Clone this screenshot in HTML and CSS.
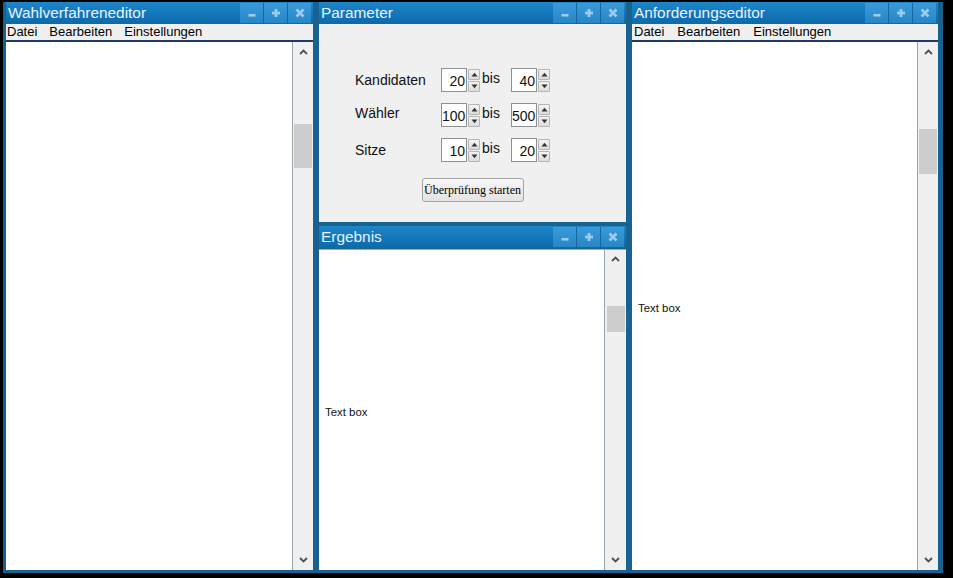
FILE: index.html
```html
<!DOCTYPE html>
<html lang="de">
<head>
<meta charset="utf-8">
<title>Wahlverfahren</title>
<link rel="stylesheet" href="styles.css">
</head>
<body>
<div class="desktop">
  <div class="col col-left">
    <section class="win win-fill">
      <header class="titlebar">
        <span class="title">Wahlverfahreneditor</span>
        <div class="ctrls">
          <span class="ctrl"><svg width="10" height="10" viewBox="0 0 10 10"><rect x="1.5" y="6" width="7" height="2.6" fill="#9fcbec"/></svg></span>
          <span class="ctrl"><svg width="10" height="10" viewBox="0 0 10 10"><rect x="1" y="3.6" width="8" height="2.8" fill="#9fcbec"/><rect x="3.6" y="1" width="2.8" height="8" fill="#9fcbec"/></svg></span>
          <span class="ctrl"><svg width="10" height="10" viewBox="0 0 10 10"><path d="M1.5 1.5 L8.5 8.5 M8.5 1.5 L1.5 8.5" stroke="#9fcbec" stroke-width="2.6"/></svg></span>
        </div>
      </header>
      <nav class="menubar"><span>Datei</span><span>Bearbeiten</span><span>Einstellungen</span></nav>
      <div class="editor">
        <div class="textarea"></div>
        <div class="scrollbar sb-left">
          <div class="arrow"><svg width="9" height="6" viewBox="0 0 9 6"><path d="M1 5 L4.5 1.5 L8 5" fill="none" stroke="#505050" stroke-width="1.8"/></svg></div>
          <div class="thumb"></div>
          <div class="track"></div>
          <div class="arrow arrow-down"><svg width="9" height="6" viewBox="0 0 9 6"><path d="M1 1 L4.5 4.5 L8 1" fill="none" stroke="#505050" stroke-width="1.8"/></svg></div>
        </div>
      </div>
    </section>
  </div>

  <div class="col col-mid">
    <section class="win win-param">
      <header class="titlebar">
        <span class="title">Parameter</span>
        <div class="ctrls">
          <span class="ctrl"><svg width="10" height="10" viewBox="0 0 10 10"><rect x="1.5" y="6" width="7" height="2.6" fill="#9fcbec"/></svg></span>
          <span class="ctrl"><svg width="10" height="10" viewBox="0 0 10 10"><rect x="1" y="3.6" width="8" height="2.8" fill="#9fcbec"/><rect x="3.6" y="1" width="2.8" height="8" fill="#9fcbec"/></svg></span>
          <span class="ctrl"><svg width="10" height="10" viewBox="0 0 10 10"><path d="M1.5 1.5 L8.5 8.5 M8.5 1.5 L1.5 8.5" stroke="#9fcbec" stroke-width="2.6"/></svg></span>
        </div>
      </header>
      <div class="param-body">
        <div class="param-grid">
          <span class="plabel">Kandidaten</span>
          <div class="spin"><span class="spin-field">20</span><span class="spin-btns"><span class="sbtn"><svg width="7" height="5" viewBox="0 0 7 5"><path d="M0.5 4.5 L3.5 0.8 L6.5 4.5 Z" fill="#333"/></svg></span><span class="sbtn"><svg width="7" height="5" viewBox="0 0 7 5"><path d="M0.5 0.5 L3.5 4.2 L6.5 0.5 Z" fill="#333"/></svg></span></span></div>
          <span class="bis">bis</span>
          <div class="spin"><span class="spin-field">40</span><span class="spin-btns"><span class="sbtn"><svg width="7" height="5" viewBox="0 0 7 5"><path d="M0.5 4.5 L3.5 0.8 L6.5 4.5 Z" fill="#333"/></svg></span><span class="sbtn"><svg width="7" height="5" viewBox="0 0 7 5"><path d="M0.5 0.5 L3.5 4.2 L6.5 0.5 Z" fill="#333"/></svg></span></span></div>

          <span class="plabel plabel-up">Wähler</span>
          <div class="spin"><span class="spin-field">100</span><span class="spin-btns"><span class="sbtn"><svg width="7" height="5" viewBox="0 0 7 5"><path d="M0.5 4.5 L3.5 0.8 L6.5 4.5 Z" fill="#333"/></svg></span><span class="sbtn"><svg width="7" height="5" viewBox="0 0 7 5"><path d="M0.5 0.5 L3.5 4.2 L6.5 0.5 Z" fill="#333"/></svg></span></span></div>
          <span class="bis">bis</span>
          <div class="spin"><span class="spin-field">500</span><span class="spin-btns"><span class="sbtn"><svg width="7" height="5" viewBox="0 0 7 5"><path d="M0.5 4.5 L3.5 0.8 L6.5 4.5 Z" fill="#333"/></svg></span><span class="sbtn"><svg width="7" height="5" viewBox="0 0 7 5"><path d="M0.5 0.5 L3.5 4.2 L6.5 0.5 Z" fill="#333"/></svg></span></span></div>

          <span class="plabel">Sitze</span>
          <div class="spin"><span class="spin-field">10</span><span class="spin-btns"><span class="sbtn"><svg width="7" height="5" viewBox="0 0 7 5"><path d="M0.5 4.5 L3.5 0.8 L6.5 4.5 Z" fill="#333"/></svg></span><span class="sbtn"><svg width="7" height="5" viewBox="0 0 7 5"><path d="M0.5 0.5 L3.5 4.2 L6.5 0.5 Z" fill="#333"/></svg></span></span></div>
          <span class="bis">bis</span>
          <div class="spin"><span class="spin-field">20</span><span class="spin-btns"><span class="sbtn"><svg width="7" height="5" viewBox="0 0 7 5"><path d="M0.5 4.5 L3.5 0.8 L6.5 4.5 Z" fill="#333"/></svg></span><span class="sbtn"><svg width="7" height="5" viewBox="0 0 7 5"><path d="M0.5 0.5 L3.5 4.2 L6.5 0.5 Z" fill="#333"/></svg></span></span></div>
        </div>
        <button class="start-btn" type="button">Überprüfung starten</button>
      </div>
    </section>

    <section class="win win-fill win-result">
      <header class="titlebar">
        <span class="title">Ergebnis</span>
        <div class="ctrls">
          <span class="ctrl"><svg width="10" height="10" viewBox="0 0 10 10"><rect x="1.5" y="6" width="7" height="2.6" fill="#9fcbec"/></svg></span>
          <span class="ctrl"><svg width="10" height="10" viewBox="0 0 10 10"><rect x="1" y="3.6" width="8" height="2.8" fill="#9fcbec"/><rect x="3.6" y="1" width="2.8" height="8" fill="#9fcbec"/></svg></span>
          <span class="ctrl"><svg width="10" height="10" viewBox="0 0 10 10"><path d="M1.5 1.5 L8.5 8.5 M8.5 1.5 L1.5 8.5" stroke="#9fcbec" stroke-width="2.6"/></svg></span>
        </div>
      </header>
      <div class="editor editor-boxed">
        <div class="textarea"><span class="tb-label">Text box</span></div>
        <div class="scrollbar sb-result">
          <div class="arrow"><svg width="9" height="6" viewBox="0 0 9 6"><path d="M1 5 L4.5 1.5 L8 5" fill="none" stroke="#505050" stroke-width="1.8"/></svg></div>
          <div class="thumb"></div>
          <div class="track"></div>
          <div class="arrow arrow-down"><svg width="9" height="6" viewBox="0 0 9 6"><path d="M1 1 L4.5 4.5 L8 1" fill="none" stroke="#505050" stroke-width="1.8"/></svg></div>
        </div>
      </div>
    </section>
  </div>

  <div class="col col-right">
    <section class="win win-fill">
      <header class="titlebar">
        <span class="title">Anforderungseditor</span>
        <div class="ctrls">
          <span class="ctrl"><svg width="10" height="10" viewBox="0 0 10 10"><rect x="1.5" y="6" width="7" height="2.6" fill="#9fcbec"/></svg></span>
          <span class="ctrl"><svg width="10" height="10" viewBox="0 0 10 10"><rect x="1" y="3.6" width="8" height="2.8" fill="#9fcbec"/><rect x="3.6" y="1" width="2.8" height="8" fill="#9fcbec"/></svg></span>
          <span class="ctrl"><svg width="10" height="10" viewBox="0 0 10 10"><path d="M1.5 1.5 L8.5 8.5 M8.5 1.5 L1.5 8.5" stroke="#9fcbec" stroke-width="2.6"/></svg></span>
        </div>
      </header>
      <nav class="menubar menubar-wide"><span>Datei</span><span>Bearbeiten</span><span>Einstellungen</span></nav>
      <div class="editor">
        <div class="textarea"><span class="tb-label">Text box</span></div>
        <div class="scrollbar sb-right">
          <div class="arrow"><svg width="9" height="6" viewBox="0 0 9 6"><path d="M1 5 L4.5 1.5 L8 5" fill="none" stroke="#505050" stroke-width="1.8"/></svg></div>
          <div class="thumb"></div>
          <div class="track"></div>
          <div class="arrow arrow-down"><svg width="9" height="6" viewBox="0 0 9 6"><path d="M1 1 L4.5 4.5 L8 1" fill="none" stroke="#505050" stroke-width="1.8"/></svg></div>
        </div>
      </div>
    </section>
  </div>
</div>
</body>
</html>
```
FILE: styles.css
```css
html, body {
  margin: 0;
  padding: 0;
}

body {
  width: 953px;
  height: 578px;
  overflow: hidden;
  background: #000;
  font-family: "Liberation Sans", Arial, sans-serif;
}

.desktop {
  box-sizing: border-box;
  margin: 2px 0 0 3px;
  width: 940px;
  height: 571px;
  padding: 0 5px 3px 3px;
  background: #17628f;
  display: flex;
  gap: 6px;
}

.col {
  display: flex;
  flex-direction: column;
}

.col-left { width: 307px; }
.col-mid { width: 307px; gap: 4px; }
.col-right { width: 306px; }

.win {
  display: flex;
  flex-direction: column;
  min-height: 0;
}

.win-fill { flex: 1; }

.titlebar {
  height: 22px;
  flex: none;
  display: flex;
  align-items: center;
  justify-content: space-between;
  background: linear-gradient(to bottom, #1f86c8 0%, #1479bd 45%, #0e69a8 100%);
  padding: 0 2px 0 2px;
}

.title {
  color: #eaf3fb;
  font-size: 15.4px;
  line-height: 22px;
  white-space: nowrap;
}

.ctrls {
  display: flex;
  align-self: flex-start;
  margin-top: 1px;
}

.ctrl {
  width: 23px;
  height: 20px;
  display: flex;
  align-items: center;
  justify-content: center;
  background: linear-gradient(to bottom, #3b9ad8 0%, #2687c8 100%);
  border-left: 1px solid #1466a0;
}

.ctrl:first-child { border-left: none; }

.menubar {
  height: 16px;
  flex: none;
  background: #f0f0f0;
  border-bottom: 2px solid #1e3a6a;
  display: flex;
  gap: 12px;
  padding-left: 1px;
  font-size: 13px;
  line-height: 16px;
  color: #000;
}

.menubar-wide {
  gap: 13px;
  padding-left: 2px;
}

.editor {
  flex: 1;
  display: flex;
  min-height: 0;
  background: #fff;
}

.editor-boxed {
  border-top: 1px solid #a9a9a9;
  margin-top: 1px;
}

.textarea {
  flex: 1;
  background: #fff;
  display: flex;
  align-items: center;
  padding: 4px 0 0 6px;
}

.tb-label {
  font-size: 11.4px;
  color: #111;
}

.scrollbar {
  width: 20px;
  flex: none;
  background: #f0f0f0;
  border-left: 1px solid #9aa5ad;
  display: flex;
  flex-direction: column;
  align-items: center;
}

.arrow {
  height: 20px;
  width: 100%;
  flex: none;
  display: flex;
  align-items: center;
  justify-content: center;
}

.track { flex: 1; }

.thumb {
  width: 18px;
  flex: none;
  background: #cdcdcd;
}

.sb-left .thumb { margin-top: 62px; height: 44px; }
.sb-right .thumb { margin-top: 67px; height: 45px; }
.sb-result { width: 21px; }
.sb-result .arrow:first-child { height: 18px; }
.sb-result .thumb { margin-top: 38px; height: 26px; }

.win-param {
  flex: none;
}

.param-body {
  height: 198px;
  box-sizing: border-box;
  background: #f0f0f0;
  padding-top: 44px;
  display: flex;
  flex-direction: column;
  align-items: center;
}

.param-grid {
  align-self: flex-start;
  margin-left: 36px;
  display: grid;
  grid-template-columns: 86px 39px 31px 39px;
  row-gap: 11px;
  align-items: center;
  font-size: 14px;
  color: #111;
}

.plabel {
  line-height: 18px;
}

.plabel-up {
  margin-top: -4px;
}

.bis {
  align-self: start;
  padding-left: 2px;
  line-height: 18px;
  margin-top: 1px;
}

.spin {
  display: flex;
  height: 24px;
}

.spin-field {
  box-sizing: border-box;
  width: 26px;
  height: 24px;
  background: #fff;
  border: 1px solid #8b8f96;
  text-align: right;
  padding-right: 1px;
  line-height: 24px;
  font-size: 14px;
  color: #111;
}

.spin-btns {
  display: flex;
  flex-direction: column;
  width: 12px;
  margin-left: 1px;
  gap: 1px;
  padding-top: 1px;
}

.sbtn {
  height: 10px;
  width: 10px;
  display: flex;
  align-items: center;
  justify-content: center;
  background: linear-gradient(#f4f4f4, #dcdcdc);
  border: 1px solid #b5b5b5;
  border-radius: 1px;
}

.start-btn {
  margin-top: 16px;
  width: 102px;
  height: 24px;
  padding: 0;
  font-family: "Liberation Serif", "Times New Roman", serif;
  font-size: 12px;
  color: #000;
  background: linear-gradient(#f7f7f7, #e3e3e3);
  border: 1px solid #a4a4a4;
  border-radius: 3px;
}
```
